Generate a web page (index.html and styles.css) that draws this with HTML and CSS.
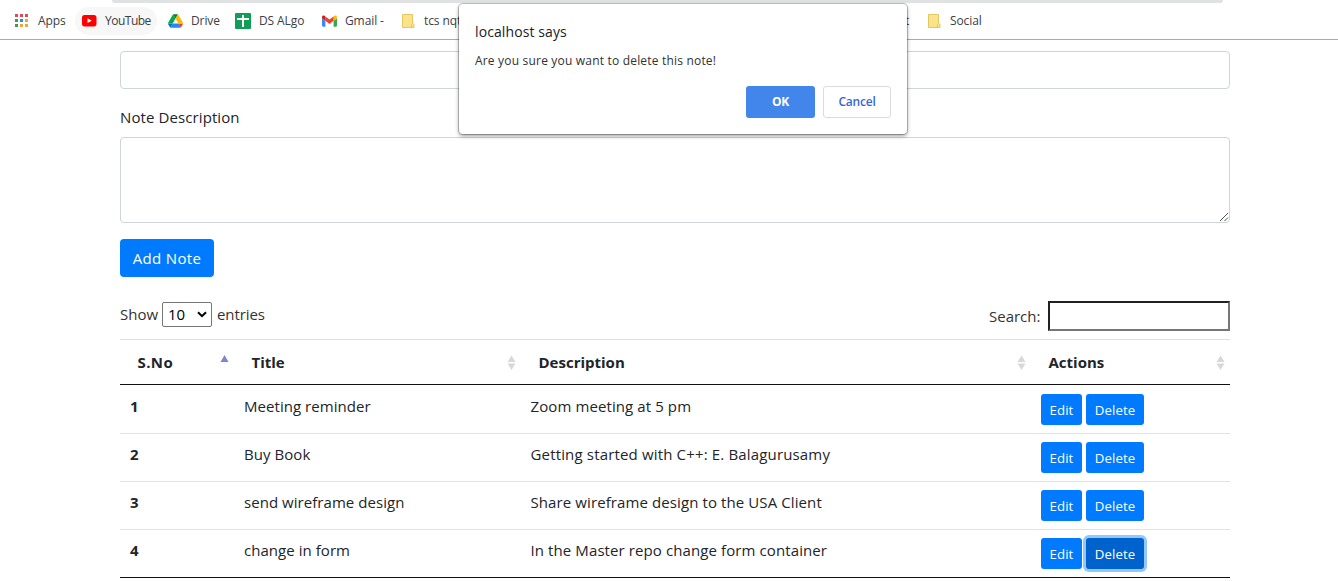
FILE: index.html
```html
<!DOCTYPE html>
<html lang="en">
<head>
<meta charset="utf-8">
<title>Notes</title>
<link rel="stylesheet" href="styles.css">
</head>
<body>
<header class="browser">
  <div class="omnibox"></div>
  <nav class="bookmarks">
    <a class="bm bm-apps"><svg class="ico" width="14" height="14" viewBox="0 0 14 14"><path fill="#db4a56" d="M0 0h3v3H0zM5 0h3v3H5zM10 0h3v3h-3z"/><path fill="#3c9a5f" d="M0 5h3v3H0zM0 10h3v3H0z"/><path fill="#4285d6" d="M5 5h3v3H5z"/><path fill="#e8a93a" d="M10 5h3v3h-3zM5 10h3v3H5zM10 10h3v3h-3z"/></svg><span>Apps</span></a>
    <a class="bm bm-youtube"><svg class="ico" width="15" height="12" viewBox="0 0 15 12"><rect width="14.5" height="11.4" rx="2.6" fill="#f00"/><path fill="#fff" d="M5.5 3.3v4.8l4.2-2.4z"/></svg><span>YouTube</span></a>
    <a class="bm bm-drive"><svg class="ico" width="15" height="14" viewBox="0 0 87 78"><path fill="#0066da" d="M6.6 66.9l3.9 6.6c.8 1.4 1.9 2.5 3.3 3.3L27.5 53H0c0 1.6.4 3.1 1.2 4.5z"/><path fill="#00ac47" d="M43.7 25L29.9 1.2c-1.3.8-2.5 1.9-3.3 3.3L1.2 48.5A9 9 0 0 0 0 53h27.5z"/><path fill="#ea4335" d="M73.6 76.8c1.3-.8 2.5-1.9 3.3-3.3l9.1-15.9c.8-1.400 1.200-3 1.200-4.500H59.800l5.900 11.500z"/><path fill="#00832d" d="M43.700 25L57.400 1.200C56.100.4 54.500 0 52.900 0H34.400c-1.600 0-3.100.4-4.500 1.200z"/><path fill="#2684fc" d="M59.800 53H27.500L13.800 76.800c1.300.8 2.900 1.200 4.500 1.200h50.800c1.600 0 3.100-.4 4.500-1.200z"/><path fill="#ffba00" d="M73.400 26.500L60.700 4.500c-.8-1.400-1.900-2.500-3.300-3.300L43.700 25l16.100 28h27.400c0-1.600-.4-3.100-1.200-4.500z"/></svg><span>Drive</span></a>
    <a class="bm bm-algo"><svg class="ico" width="16" height="16" viewBox="0 0 16 16"><rect width="16" height="16" rx="1" fill="#109d58"/><path fill="#fff" d="M7 2h2v3h5v2H9v7H7V7H2V5h5z"/></svg><span>DS ALgo</span></a>
    <a class="bm bm-gmail"><svg class="ico" width="15" height="12" viewBox="52 42 88 66"><path fill="#4285f4" d="M58 108h14V74L52 59v43c0 3.300 2.700 6 6 6"/><path fill="#34a853" d="M120 108h14c3.300 0 6-2.700 6-6V59l-20 15"/><path fill="#fbbc04" d="M120 48v26l20-15v-8c0-7.400-8.500-11.600-14.400-7.200"/><path fill="#ea4335" d="M72 74V48l24 18 24-18v26L96 92"/><path fill="#c5221f" d="M52 51v8l20 15V48l-5.600-4.200C60.500 39.400 52 43.600 52 51"/></svg><span>Gmail -</span></a>
    <a class="bm bm-tcs"><svg class="ico" width="13" height="15" viewBox="0 0 13 15"><path fill="#fbe38a" stroke="#e3c765" d="M.5.5h10v8.500l1.500 1.500v3H.5z"/><path fill="none" stroke="#e3c765" d="M9.500 13v-3"/></svg><span>tcs nqt</span></a>
    <a class="bm bm-hidden"><span>t</span></a>
    <a class="bm bm-social"><svg class="ico" width="13" height="15" viewBox="0 0 13 15"><path fill="#fbe38a" stroke="#e3c765" d="M.5.5h10v8.500l1.500 1.500v3H.5z"/><path fill="none" stroke="#e3c765" d="M9.500 13v-3"/></svg><span>Social</span></a>
  </nav>
</header>
<main class="container">
  <div class="field title-field"></div>
  <label class="label">Note Description</label>
  <div class="field desc-field"><svg class="grip" width="10" height="10" viewBox="0 0 10 10"><path stroke="#555" stroke-width="1" d="M1 9L9 1M5.500 9L9 5.500"/></svg></div>
  <button class="btn add">Add Note</button>
  <div class="controls">
    <div class="length"><span class="show">Show</span><span class="select"><span>10</span><svg width="10" height="7" viewBox="0 0 10 7"><path d="M1 1.200l4 4 4-4" fill="none" stroke="#000" stroke-width="2"/></svg></span><span class="entries">entries</span></div>
    <div class="search"><span class="search-label">Search:</span><input class="search-input" type="text"></div>
  </div>
  <div class="table">
    <div class="head">
      <div class="th"><span class="h-sno">S.No</span><svg class="sort" width="9" height="16" viewBox="0 0 9 16"><path fill="#7f86cb" d="M4.500 0L8.500 7h-8z"/></svg></div>
      <div class="th"><span>Title</span><svg class="sort" width="9" height="16" viewBox="0 0 9 16"><path fill="#d8d8d8" d="M4.500 0.500L8.500 7h-8zM.5 8.500h8L4.500 15z"/></svg></div>
      <div class="th"><span>Description</span><svg class="sort" width="9" height="16" viewBox="0 0 9 16"><path fill="#d8d8d8" d="M4.500 0.500L8.500 7h-8zM.5 8.500h8L4.500 15z"/></svg></div>
      <div class="th"><span>Actions</span><svg class="sort" width="9" height="16" viewBox="0 0 9 16"><path fill="#d8d8d8" d="M4.500 0.500L8.500 7h-8zM.5 8.500h8L4.500 15z"/></svg></div>
    </div>
    <div class="row first"><div class="td num">1</div><div class="td">Meeting reminder</div><div class="td desc">Zoom meeting at 5 pm</div><div class="td acts"><button class="btn sm edit">Edit</button><button class="btn sm del">Delete</button></div></div>
    <div class="row"><div class="td num">2</div><div class="td">Buy Book</div><div class="td desc long">Getting started with C++: E. Balagurusamy</div><div class="td acts"><button class="btn sm edit">Edit</button><button class="btn sm del">Delete</button></div></div>
    <div class="row"><div class="td num">3</div><div class="td">send wireframe design</div><div class="td desc">Share wireframe design to the USA Client</div><div class="td acts"><button class="btn sm edit">Edit</button><button class="btn sm del">Delete</button></div></div>
    <div class="row"><div class="td num">4</div><div class="td">change in form</div><div class="td desc">In the Master repo change form container</div><div class="td acts"><button class="btn sm edit">Edit</button><button class="btn sm del pressed">Delete</button></div></div>
  </div>
</main>
<section class="dialog">
  <div class="dlg-title">localhost says</div>
  <div class="dlg-text">Are you sure you want to delete this note!</div>
  <div class="dlg-actions"><button class="dbtn ok">OK</button><button class="dbtn cancel">Cancel</button></div>
</section>
</body>
</html>
```
FILE: styles.css
```css
* { box-sizing: border-box; }
body { margin: 0; height: 581px; overflow: hidden; background: #fff; color: #212529; font: 15px/24px "Open Sans", "Noto Sans", sans-serif; }
button { font-family: inherit; }
span { white-space: nowrap; }

.browser { height: 40px; border-bottom: 1px solid #a9acaf; }
.omnibox { height: 3px; margin: 0 115px 0 112px; background: #dfe1e3; border-radius: 0 0 10px 10px; }
.bookmarks { display: flex; height: 36px; align-items: center; font-size: 12px; line-height: 28px; letter-spacing: -.1px; color: #3c4043; }
.bm { display: flex; align-items: center; height: 28px; flex: none; }
.ico { flex: none; }
.bm-apps { width: 75px; padding-left: 15px; gap: 9px; }
.bm-youtube { width: 82px; padding-left: 7px; gap: 8px; border-radius: 14px; background: #f7f7f7; letter-spacing: -.5px; }
.bm-drive { width: 78px; padding-left: 11px; gap: 8px; }
.bm-algo { width: 86px; gap: 8px; }
.bm-gmail { width: 81px; padding-left: 1px; gap: 8px; }
.bm-tcs { width: 500px; gap: 9px; }
.bm-hidden { width: 26px; padding-left: 3px; }
.bm-social { gap: 9px; }

.container { width: 1110px; margin: 11px 0 0 120px; }
.field { border: 1px solid #ced4da; border-radius: 4px; }
.title-field { height: 38px; }
.label { display: block; margin: 16px 0 8px; line-height: 24px; letter-spacing: .1px; }
.desc-field { display: flex; height: 86px; justify-content: flex-end; align-items: flex-end; }
.btn { border: 0; border-radius: 4px; background: #007bff; color: #fff; padding: 0; text-align: center; }
.add { display: block; width: 94px; height: 38px; margin-top: 16px; font-size: 15px; letter-spacing: .35px; }

.controls { display: flex; justify-content: space-between; align-items: flex-start; height: 38px; margin-top: 24px; color: #333; }
.length { display: flex; align-items: center; height: 26px; }
.show { width: 42px; }
.select { display: flex; align-items: center; justify-content: space-between; width: 50px; height: 25px; padding: 0 4px 0 5px; margin-right: 5px; border: 1px solid #767676; border-radius: 2px; color: #000; }
.entries { letter-spacing: -.1px; }
.search { display: flex; align-items: center; height: 30px; }
.search-label { width: 59px; }
.search-input { width: 182px; height: 30px; border: 2px inset #767676; border-radius: 0; background: #fff; }

.table { border-bottom: 1px solid #111; }
.head, .row { display: grid; grid-template-columns: 114px 287px 510px 199px; }
.head { height: 46px; border: solid #dee2e6; border-width: 1px 0; border-bottom-color: #111; font-weight: 700; }
.row { height: 48px; border-top: 1px solid #dee2e6; }
.first { border-top-color: transparent; }
.th { display: flex; justify-content: space-between; align-items: center; padding: 0 5px 0 17.5px; }
.sort { margin-top: 2px; }
.h-sno { letter-spacing: .4px; }
.td { padding: 8px 10px 0; line-height: 24px; letter-spacing: .05px; }
.desc { padding-left: 9.5px; letter-spacing: .1px; }
.long { letter-spacing: .16px; }
.num { font-weight: 700; }
.acts { display: flex; align-items: flex-start; gap: 4px; }
.sm { height: 31px; border-radius: 3px; font-size: 13.2px; letter-spacing: .1px; }
.edit { width: 41px; }
.del { width: 58px; }
.pressed { background: #0062cc; box-shadow: 0 0 0 3px rgba(38, 143, 255, .5); }

.dialog { position: absolute; left: 459px; top: 4px; width: 448px; height: 130px; padding: 16px; background: #fff; border-radius: 4px; box-shadow: 0 0 0 1px rgba(0, 0, 0, .22), 0 2px 4px rgba(0, 0, 0, .4); }
.dlg-title { font-size: 14px; line-height: 24px; letter-spacing: .1px; color: #202124; }
.dlg-text { margin-top: 6px; font-size: 12px; line-height: 22px; letter-spacing: .19px; color: #303134; }
.dlg-actions { display: flex; justify-content: flex-end; gap: 8px; margin-top: 14px; }
.dbtn { height: 32px; border-radius: 3px; font-size: 12px; font-weight: 600; letter-spacing: -.2px; padding: 0 0 1px; }
.ok { width: 69px; border: 0; background: #4285eb; color: #fff; font-weight: 700; }
.cancel { width: 68px; border: 1px solid #dadce0; background: #fff; color: #3367d6; }
```
